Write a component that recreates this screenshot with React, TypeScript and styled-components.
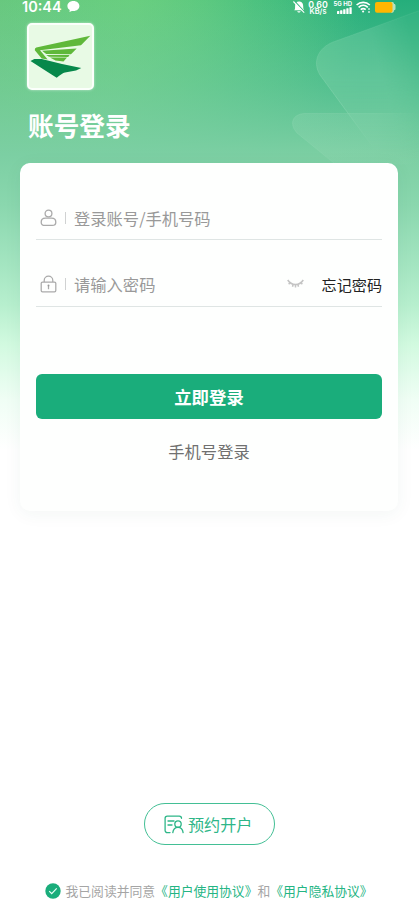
import React from 'react';
import styled, { createGlobalStyle } from 'styled-components';

const GlobalStyle = createGlobalStyle`
  * { box-sizing: border-box; }
  body { margin: 0; background: #fff; }
  button, input { font: inherit; }
`;

const Screen = styled.main`
  position: relative;
  display: flex;
  flex-direction: column;
  width: 419px;
  height: 910px;
  overflow: hidden;
  background:
    linear-gradient(180deg, rgba(124, 207, 163, 0) 0, rgba(124, 207, 163, 0.5) 85px, #7ccfa3 155px, #8ad7ae 205px, #a4e5c1 265px, #b7efce 305px, #d2fae0 345px, #f0fef5 400px, #fff 450px),
    radial-gradient(ellipse 230px 190px at 130px 0, rgba(107, 208, 128, 0.8) 0, rgba(107, 208, 128, 0) 100%),
    linear-gradient(100deg, #66c47e 0, #60c87f 130px, #3cba7f 250px, #25ae7b 370px);
  font-family: 'Noto Sans CJK SC', sans-serif;
`;

const Facets = styled.svg`
  position: absolute;
  top: 0;
  right: 0;
`;

const StatusBar = styled.header`
  position: relative;
  display: flex;
  align-items: center;
  height: 14px;
  padding: 0 23px 0 22px;
  color: #fff;
  font-family: Inter, sans-serif;
`;

const Clock = styled.span`
  width: 45px;
  font-size: 14.5px;
  font-weight: 600;
  line-height: 14px;
`;

const StatusIcons = styled.div`
  display: flex;
  align-items: center;
  margin-left: auto;
`;

const Speed = styled.div`
  display: flex;
  flex-direction: column;
  align-items: center;
  width: 20px;
  margin: 1px 4px 0 3px;
  font-weight: 600;
  font-size: 8.8px;
  line-height: 7px;
  small { font-size: 7.4px; line-height: 7px; }
`;

const Signal = styled.div`
  display: flex;
  flex-direction: column;
  align-items: flex-end;
  width: 20px;
  margin-right: 4px;
  font-size: 6px;
  font-weight: 700;
  line-height: 6px;
  white-space: nowrap;
`;

const Brand = styled.section`
  position: relative;
  height: 149px;
  padding: 9px 27px 0;
`;

const Logo = styled.div`
  width: 67px;
  height: 67px;
  border: 2px solid #fbfffb;
  border-radius: 5px;
  background: #e8fae5;
  box-shadow: 0 0 3px rgba(255, 255, 255, 0.55);
  svg { display: block; }
`;

const Title = styled.h1`
  margin: 15px 0 0 1px;
  color: #fff;
  font-size: 25.7px;
  font-weight: 700;
  line-height: 40px;
`;

const Card = styled.form`
  position: relative;
  display: flex;
  flex-direction: column;
  width: 378px;
  height: 348px;
  margin-left: 20px;
  padding: 34px 16px 0;
  border-radius: 10px;
  background: #fefffe;
  box-shadow: 0 3px 18px rgba(40, 100, 70, 0.055);
`;

const Field = styled.label<{ $spaced?: boolean }>`
  display: flex;
  align-items: center;
  height: ${p => (p.$spaced ? 66.5 : 43)}px;
  padding: ${p => (p.$spaced ? 23 : 0)}px 0 0 4px;
  border-bottom: 1px solid #dfe5e4;
  svg { flex: none; }
`;

const Divider = styled.i`
  width: 1px;
  height: 12px;
  margin: 0 8.5px 0 7.5px;
  background: #d0d2d2;
`;

const Input = styled.input`
  flex: 1;
  min-width: 0;
  height: 28px;
  padding: 0;
  border: 0;
  outline: 0;
  background: transparent;
  font-size: 16.3px;
  &::placeholder { color: #999; opacity: 1; }
`;

const Forgot = styled.button`
  margin: 0 0 0 17px;
  padding: 0;
  border: 0;
  background: none;
  color: #222;
  font-size: 15.1px;
  line-height: 24px;
`;

const Submit = styled.button`
  height: 45px;
  margin-top: 67px;
  padding: 0;
  border: 0;
  border-radius: 6px;
  background: #1aad7b;
  color: #fff;
  font-size: 17.4px;
  font-weight: 700;
`;

const Alternate = styled.button`
  align-self: center;
  margin-top: 20px;
  padding: 0;
  border: 0;
  background: none;
  color: #707070;
  font-size: 16.3px;
  line-height: 24px;
`;

const Footer = styled.footer`
  display: flex;
  flex-direction: column;
  align-items: center;
  margin-top: auto;
`;

const OpenAccount = styled.button`
  display: flex;
  align-items: center;
  gap: 4px;
  width: 131px;
  height: 42px;
  padding: 0 0 0 19px;
  border: 1.3px solid #43bf95;
  border-radius: 21px;
  background: #fff;
  color: #2eb688;
  font-size: 16.1px;
`;

const Agreement = styled.p`
  display: flex;
  align-items: center;
  width: 329px;
  height: 20px;
  margin: 36px 0 9px;
  color: #a5a5a5;
  font-size: 12.8px;
  line-height: 20px;
  white-space: nowrap;
  svg { margin-right: 4.5px; flex: none; }
  a { color: #24b584; }
`;

const UserIcon = () => (
  <svg width="17" height="18" viewBox="0 0 17 18" fill="none" stroke="#aaa" strokeWidth="1.3">
    <circle cx="8.5" cy="4.5" r="3.4" />
    <path d="M5.4 9.2h6.2c2.7 0 4.2 1.7 4.2 4s-1.4 3.2-3.6 3.2H4.8c-2.2 0-3.6-.9-3.6-3.2s1.5-4 4.2-4Z" />
  </svg>
);

const LockIcon = () => (
  <svg width="17" height="18" viewBox="0 0 17 18" fill="none" stroke="#aaa" strokeWidth="1.25">
    <rect x="1.2" y="7" width="14.6" height="9.8" rx="1.3" />
    <path d="M4.2 7V5.5a4.3 4.3 0 0 1 8.6 0V7M8.5 11v3.2" />
    <circle cx="8.5" cy="10.6" r="1" fill="#999" stroke="none" />
  </svg>
);

const ClosedEye = () => (
  <svg width="18" height="10" viewBox="0 0 18 10" fill="none" stroke="#c4c4c4" strokeWidth="1.5">
    <path d="M.7 1C4.6 7 12.4 7 16.3 1M3.3 3.3 1.7 5.2M6.2 5 5.5 7.7M10.8 5l.7 2.7M13.7 3.3l1.6 1.9M8.5 5.5v3" />
  </svg>
);

const StatusGlyphs = () => (
  <StatusIcons>
    <svg width="12" height="14" viewBox="0 0 12 14">
      <path d="M1.2 10.3c1.1-1 .8-2.5.9-4.6C2.3 3.2 3.5 1.5 6 1.5c3 0 4.2 2.2 4.2 4.7 0 2 .2 3 1 4.1Z" fill="#fff" />
      <path d="M4.2 11.2h3.5c-.5 1.8-3 1.8-3.5 0" fill="#fff" />
      <path d="m1.6 1.1 10 10.8" stroke="#35b780" strokeWidth="1.3" />
      <path d="m.4 1.5 10.8 11.2" stroke="#fff" strokeWidth="1.1" />
    </svg>
    <Speed><span>0.60</span><small>KB/s</small></Speed>
    <Signal>
      <span>5G HD</span>
      <svg width="15" height="7" viewBox="0 0 15 7" fill="#fff">
        <rect x="0" y="4" width="2.3" height="3" rx=".5" />
        <rect x="3.1" y="3.2" width="2.3" height="3.8" rx=".5" />
        <rect x="6.2" y="2.2" width="2.3" height="4.8" rx=".5" />
        <rect x="9.3" y="1.2" width="2.3" height="5.8" rx=".5" />
        <rect x="12.4" y=".2" width="2.3" height="6.8" rx=".5" />
      </svg>
    </Signal>
    <svg width="18" height="14" viewBox="0 0 18 14" fill="none" stroke="#fff" strokeWidth="1.7">
      <path d="M.6 5c3.8-3.6 9.4-3.6 13.2 0M2.6 7.3c2.8-2.5 6.5-2.5 9.2 0M4.7 9.6c1.6-1.3 3.5-1.3 5 0" />
      <circle cx="7.1" cy="11.5" r="1.1" fill="#fff" stroke="none" />
      <path d="M13 8v5" strokeWidth="1.1" strokeDasharray="2 1" />
    </svg>
    <svg width="22" height="14" viewBox="0 0 22 14">
      <path d="M17 2h1.2c1.3 0 1.8.8 1.8 2.1h.2c.9 0 1.3.7 1.3 1.5v3.2c0 .8-.4 1.4-1.3 1.4H20c0 1.6-.6 2.5-1.8 2.5H17Z" fill="#b9e2bd" />
      <rect x="1" y="2" width="17.5" height="10.7" rx="2" fill="#ffb600" />
    </svg>
  </StatusIcons>
);

export default function App() {
  return (
    <>
      <GlobalStyle />
      <Screen>
        <Facets width="140" height="175" viewBox="279 0 140 175">
          <defs>
            <linearGradient id="upper" x1="325" y1="90" x2="419" y2="65" gradientUnits="userSpaceOnUse">
              <stop stopColor="#9bdfbd" stopOpacity=".25" />
              <stop offset=".6" stopColor="#9bdfbd" stopOpacity=".25" />
              <stop offset="1" stopColor="#9bdfbd" stopOpacity=".07" />
            </linearGradient>
            <linearGradient id="fade" x1="0" y1="80" x2="0" y2="160" gradientUnits="userSpaceOnUse">
              <stop stopColor="#fff" />
              <stop offset="1" stopColor="#fff" stopOpacity="0" />
            </linearGradient>
            <mask id="upperMask" maskUnits="userSpaceOnUse" x="279" y="0" width="140" height="175">
              <rect x="279" y="0" width="140" height="175" fill="url(#fade)" />
            </mask>
            <linearGradient id="edge" x1="0" y1="20" x2="0" y2="150" gradientUnits="userSpaceOnUse">
              <stop stopColor="#a9e3c5" stopOpacity=".1" />
              <stop offset=".65" stopColor="#a9e3c5" stopOpacity=".3" />
              <stop offset="1" stopColor="#a9e3c5" stopOpacity="0" />
            </linearGradient>
            <linearGradient id="lower" x1="292" y1="0" x2="419" y2="0" gradientUnits="userSpaceOnUse">
              <stop stopColor="#9adbb8" stopOpacity=".26" />
              <stop offset=".65" stopColor="#9adbb8" stopOpacity=".18" />
              <stop offset="1" stopColor="#9adbb8" stopOpacity="0" />
            </linearGradient>
          </defs>
          <path d="M421 10 333 42C318 48 312 62 320 75L375 150 421 165Z" fill="url(#upper)" mask="url(#upperMask)" />
          <path d="M421 10 333 42C318 48 312 62 320 75L375 150" fill="none" stroke="url(#edge)" />
          <path d="M421 113.5H305C292 114 289 124 297 133L335 164H421Z" fill="url(#lower)" stroke="url(#lower)" />
        </Facets>
        <StatusBar>
          <Clock>10:44</Clock>
          <svg width="13" height="14" viewBox="0 0 13 14">
            <path d="M6.4 1C2.8 1 .4 3.2.4 6c0 1.8 1 3.2 2.4 4.1L2.4 12l2.5-1.1 1.5.1C10 11 12.4 8.8 12.4 6S10 1 6.4 1Z" fill="#fff" />
          </svg>
          <StatusGlyphs />
        </StatusBar>
        <Brand>
          <Logo>
            <svg width="63" height="63" viewBox="29 25 63 63">
              <path d="M90.3 35.8 81 45.2 40 50.2 47.7 59.4 41.7 58.4 34.8 50.2Q34.5 48.3 36.3 47.6Z" fill="#5fb83a" />
              <path d="M42 50.8 76.7 48.5 71 54.3 46.2 54.1ZM46.2 54.9 69.5 55.1 68.2 57 49 56.8ZM50 57.4 67 57.5 63.5 61.4 55.5 60.5Z" fill="#5fb83a" />
              <path d="M30.5 61 34.3 59H41.7L62 64 81.3 68 76 70.6 65 72.6Q62 73.3 56.7 77.8L48 72.2Z" fill="#07884b" />
            </svg>
          </Logo>
          <Title>账号登录</Title>
        </Brand>
        <Card>
          <Field>
            <UserIcon />
            <Divider />
            <Input placeholder="登录账号/手机号码" />
          </Field>
          <Field $spaced>
            <LockIcon />
            <Divider />
            <Input placeholder="请输入密码" />
            <ClosedEye />
            <Forgot type="button">忘记密码</Forgot>
          </Field>
          <Submit type="button">立即登录</Submit>
          <Alternate type="button">手机号登录</Alternate>
        </Card>
        <Footer>
          <OpenAccount type="button">
            <svg width="20" height="19" viewBox="0 0 20 19" fill="none" stroke="currentColor" strokeWidth="1.3" strokeLinecap="round">
              <path d="M6 17.6H3.3A2.2 2.2 0 0 1 1.1 15.4V3.3A2.2 2.2 0 0 1 3.3 1.1h12A2.2 2.2 0 0 1 17.5 3.3M4 6h6M4 10h4" />
              <circle cx="14" cy="9" r="3.2" />
              <path d="M8.8 17.7c.4-3.3 2.4-5.4 5.2-5.4s4.7 2.1 5.1 5.4" />
            </svg>
            <span>预约开户</span>
          </OpenAccount>
          <Agreement>
            <svg width="16" height="16" viewBox="0 0 16 16">
              <circle cx="8" cy="8" r="7.7" fill="#1aad7b" />
              <path d="m4.2 8.1 2.5 2.5 5-5.2" fill="none" stroke="#e8fff6" strokeWidth="1.2" />
            </svg>
            <span>我已阅读并同意</span><a>《用户使用协议》</a><span>和</span><a>《用户隐私协议》</a>
          </Agreement>
        </Footer>
      </Screen>
    </>
  );
}
